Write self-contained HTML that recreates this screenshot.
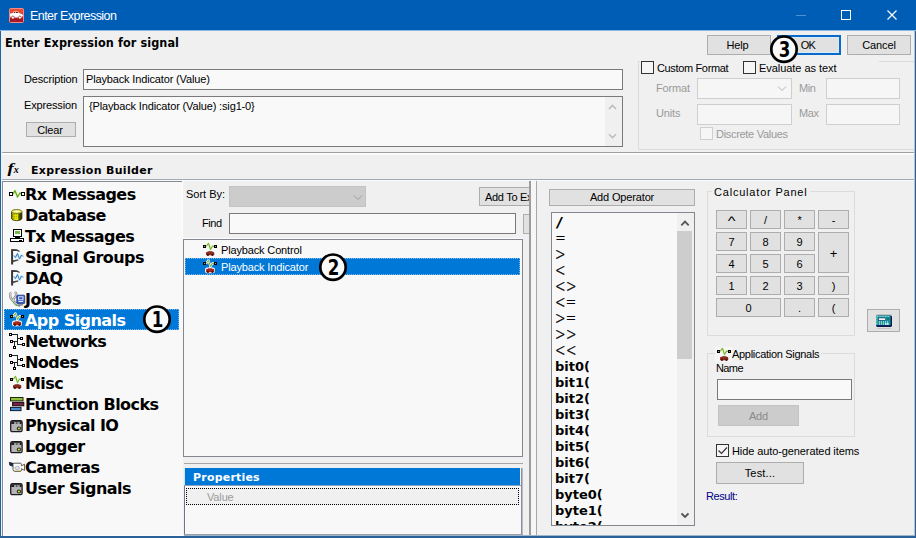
<!DOCTYPE html>
<html>
<head>
<meta charset="utf-8">
<title>Enter Expression</title>
<style>
*{box-sizing:border-box;margin:0;padding:0}
html,body{width:916px;height:538px;overflow:hidden;background:#f0f0f0}
body{position:relative;font-family:"Liberation Sans",sans-serif;font-size:11px;color:#000;letter-spacing:-0.15px}
.abs{position:absolute}
#win{position:absolute;left:0;top:0;width:916px;height:538px;background:#f0f0f0;overflow:hidden}
#title{position:absolute;left:0;top:0;width:916px;height:30px;background:#005db6}
#title .t{position:absolute;left:30px;top:9px;font-size:12.5px;line-height:15px;color:#fff;white-space:nowrap;letter-spacing:-0.55px}
.btn{position:absolute;background:#e1e1e1;border:1px solid #adadad;text-align:center;font-size:11px;white-space:nowrap;overflow:hidden}
.inp{position:absolute;background:#f9f9f9;border:1px solid #7a7a7a}
.dis{border-color:#cfcfcf;background:#f6f6f6}
.lbl{position:absolute;white-space:nowrap;font-size:11px;line-height:13px}
.gray{color:#9a9a9a}
.chk{position:absolute;width:13px;height:13px;border:1px solid #333;background:#f6f6f6}
.dj{font-family:"DejaVu Sans","Liberation Sans",sans-serif;font-weight:bold}
.djc{font-family:"DejaVu Sans Condensed","DejaVu Sans","Liberation Sans",sans-serif;font-weight:bold}
.tree{position:absolute;left:22px;font-family:"DejaVu Sans","Liberation Sans",sans-serif;font-weight:bold;font-size:16px;letter-spacing:-0.55px;white-space:nowrap;line-height:21px;height:21px}
.op{position:absolute;left:3px;font-family:"DejaVu Sans","Liberation Sans",sans-serif;font-size:13px;letter-spacing:0;white-space:nowrap;line-height:16px;height:16px}
.op.b{font-weight:bold}
.op .s{display:inline-block;transform:translateY(0.9px) scale(0.96,1.3);transform-origin:0 58%;margin-right:-0.4px;font-weight:200;-webkit-text-stroke:0.3px #000}
.op .sl{display:inline-block;transform:translate(0.7px,1.1px) scale(1.65,1.12);transform-origin:0 60%}
.ico{position:absolute;width:16px;height:16px;overflow:visible}
.circ{position:absolute;overflow:visible}
.hl{background:#0078d7}
</style>
</head>
<body>
<div id="win">
<div id="title"><div class="t">Enter Expression</div>
<svg class="abs" style="left:9.3px;top:7.6px;overflow:visible" width="15" height="15" viewBox="0 0 15 15" ><linearGradient id="tig" x1="0" y1="0" x2="0" y2="1"><stop offset="0" stop-color="#ee5030"/><stop offset=".55" stop-color="#d83a2a"/><stop offset=".8" stop-color="#9c1420"/><stop offset="1" stop-color="#b02030"/></linearGradient><rect x="0.5" y="0.5" width="14" height="14" rx="1" fill="url(#tig)" stroke="#f08a8a" stroke-width="1"/><path d="M1 6.2Q1 5.2 2.4 5.2L3.6 5.1L4.8 3.6H9L10.6 5.2L13.2 6.2L14.2 7.6L13.4 8.4H13V9.4H1.6Q1 8 1 6.2Z" fill="#fff"/><path d="M4.4 4.9L5.2 4H6.2V5Z M6.9 4H8.6L9.6 5H6.9Z" fill="#5a1a1a"/><circle cx="3.9" cy="9.6" r="1.5" fill="#fff" stroke="#a02028" stroke-width="0.7"/><circle cx="10.9" cy="9.6" r="1.5" fill="#fff" stroke="#a02028" stroke-width="0.7"/></svg>
<svg class="abs" style="left:790px;top:5px" width="120" height="20" viewBox="0 0 120 20"><path d="M6 10.5H16" stroke="#4a93d6" stroke-width="1" fill="none"/><rect x="51.5" y="5.5" width="9" height="9" fill="none" stroke="#fff" stroke-width="1"/><path d="M97.5 5.5L106.5 14.5M106.5 5.5L97.5 14.5" stroke="#fff" stroke-width="1.2" fill="none"/></svg>
</div>
<div class="abs" style="left:0;top:30px;width:916px;height:1px;background:#8fb6dc"></div>
<div class="lbl djc" style="left:5px;top:35px;font-size:12.5px;line-height:16px;letter-spacing:0.1px">Enter Expression for signal</div>
<div class="btn" style="left:707px;top:35px;width:64px;height:20px;line-height:18px;padding-right:3px">Help</div>
<div class="btn" style="left:777px;top:35px;width:64px;height:20px;line-height:16px;border:2px solid #0a6ac8;background:#d8ecfc"><div class="abs" style="left:1px;top:1px;right:1px;bottom:1px;background:#e1e1e1"></div><span style="position:relative;left:-1px;letter-spacing:-0.8px">OK</span></div>
<div class="btn" style="left:847px;top:35px;width:64px;height:20px;line-height:18px">Cancel</div>
<div class="lbl" style="left:24px;top:73px">Description</div>
<div class="inp" style="left:83px;top:69px;width:540px;height:21px"><div class="lbl" style="left:2px;top:3px">Playback Indicator (Value)</div></div>
<div class="lbl" style="left:24px;top:99px">Expression</div>
<div class="inp" style="left:83px;top:96px;width:540px;height:51px"><div class="lbl" style="left:5px;top:3px">{Playback Indicator (Value) :sig1-0}</div>
<div class="abs" style="right:0;top:0;width:17px;height:49px;background:#f0f0f0"></div>
<svg class="abs" style="right:0;top:0" width="17" height="49" viewBox="0 0 17 49"><path d="M4 12L7.5 8.5L11 12M4 37.2L7.5 40.7L11 37.2" stroke="#bdbdbd" stroke-width="1.6" fill="none"/></svg>
</div>
<div class="btn" style="left:26px;top:122px;width:50px;height:15px;line-height:13px;padding:1px 2px 0 0">Clear</div>
<div class="abs" style="left:638px;top:61px;width:276px;height:89px;border:1px solid #dcdcdc;border-right:none"></div>
<div class="abs" style="left:640px;top:60px;width:239px;height:16px;background:#f0f0f0"></div>
<div class="chk" style="left:641px;top:61px"></div>
<div class="lbl" style="left:657px;top:62px;letter-spacing:-0.35px">Custom Format</div>
<div class="chk" style="left:743px;top:61px"></div>
<div class="lbl" style="left:759px;top:62px;letter-spacing:-0.05px">Evaluate as text</div>
<div class="lbl gray" style="left:656px;top:82px">Format</div>
<div class="inp dis" style="left:697px;top:78px;width:95px;height:21px"><svg class="abs" style="right:4px;top:6px" width="10" height="7" viewBox="0 0 10 7"><path d="M1 1.5L5 5.5L9 1.5" stroke="#b4b4b4" stroke-width="1" fill="none"/></svg></div>
<div class="lbl gray" style="left:799px;top:82px;letter-spacing:-0.4px">Min</div>
<div class="inp dis" style="left:826px;top:78px;width:74px;height:21px"></div>
<div class="lbl gray" style="left:656px;top:107px">Units</div>
<div class="inp dis" style="left:697px;top:104px;width:95px;height:21px"></div>
<div class="lbl gray" style="left:799px;top:107px;letter-spacing:-0.4px">Max</div>
<div class="inp dis" style="left:826px;top:104px;width:74px;height:21px"></div>
<div class="chk" style="left:700px;top:127px;border-color:#cfcfcf;background:#f6f6f6"></div>
<div class="lbl gray" style="left:716px;top:128px;letter-spacing:-0.3px">Discrete Values</div>
<div class="abs" style="left:1px;top:152px;width:914px;height:1px;background:#a0a0a0"></div>
<div class="abs" style="left:1px;top:153px;width:914px;height:2px;background:#fbfbfb"></div>
<svg class="abs" style="left:7px;top:163px;overflow:visible" width="14" height="15" viewBox="0 0 14 15" ><text transform="translate(0.6,10) scale(1.3,1)" x="0" y="0" font-family="'Liberation Serif',serif" font-style="italic" font-weight="bold" font-size="14.5" fill="#000">f</text><text x="6.8" y="10.2" font-family="'Liberation Serif',serif" font-style="italic" font-weight="bold" font-size="10" fill="#000">x</text></svg>
<div class="lbl dj" style="left:31px;top:164px;font-size:11px;letter-spacing:0.32px">Expression Builder</div>
<div class="abs" style="left:1px;top:179px;width:914px;height:1px;background:#a3a9b3"></div>
<div class="abs" style="left:1px;top:180px;width:914px;height:1px;background:#fbfbfb"></div>
<div class="abs" id="treebox" style="left:2px;top:181px;width:181px;height:355px;background:#f8f8f8;border-left:1px solid #868a94;border-top:1px solid #868a94">
<div class="abs" style="left:0;top:0;width:1px;height:354px;background:#fff"></div>
<div class="abs hl" style="left:1px;top:127px;width:175px;height:21px;outline:1px dotted #7fb4e6;outline-offset:-1px"></div>
<div class="tree" style="top:2px">Rx Messages</div>
<div class="tree" style="top:23px">Database</div>
<div class="tree" style="top:44px">Tx Messages</div>
<div class="tree" style="top:65px">Signal Groups</div>
<div class="tree" style="top:86px">DAQ</div>
<div class="tree" style="top:107px">Jobs</div>
<div class="tree" style="top:128px;color:#fff">App Signals</div>
<div class="tree" style="top:149px">Networks</div>
<div class="tree" style="top:170px">Nodes</div>
<div class="tree" style="top:191px">Misc</div>
<div class="tree" style="top:212px">Function Blocks</div>
<div class="tree" style="top:233px">Physical IO</div>
<div class="tree" style="top:254px">Logger</div>
<div class="tree" style="top:275px">Cameras</div>
<div class="tree" style="top:296px">User Signals</div>
<svg class="abs" style="left:6px;top:7px;overflow:visible" width="16" height="10" viewBox="0 0 16 10" ><path d="M4 5L6 1.6L8.5 8L11 4L12 5" stroke="#cfe87a" stroke-width="2.2" fill="none" stroke-linejoin="round" opacity=".7"/><rect x="0.5" y="3.5" width="3" height="3" fill="#fff" stroke="#000" stroke-width="1"/><rect x="12.5" y="3.5" width="3" height="3" fill="#fff" stroke="#000" stroke-width="1"/><path d="M4 5L6 1.6L8.5 8L11 4L12 5" stroke="#5fa020" stroke-width="1.1" fill="none" stroke-linejoin="round"/></svg>
<svg class="abs" style="left:8px;top:27px;overflow:visible" width="12" height="12" viewBox="0 0 12 12" ><linearGradient id="dbg" x1="0" y1="0" x2="1" y2="0"><stop offset="0" stop-color="#7c8c14"/><stop offset=".3" stop-color="#e9e400"/><stop offset=".58" stop-color="#f6f000"/><stop offset=".72" stop-color="#5a5a00"/><stop offset="1" stop-color="#141400"/></linearGradient><path d="M0.5 2.6V9.2C0.5 10.8 3 11.6 5.7 11.6C8.4 11.6 10.9 10.8 10.9 9.2V2.6Z" fill="url(#dbg)" stroke="#3c3c00" stroke-width="0.9"/><path d="M0.8 5.6H10.6M0.8 7.4H10.6M0.8 9.2H10.6" stroke="#55600a" stroke-width="0.8" stroke-dasharray="1 1" opacity=".7"/><ellipse cx="5.7" cy="2.5" rx="5.2" ry="2" fill="#f1ee7a" stroke="#6a6a10" stroke-width="0.9"/><ellipse cx="5.7" cy="2.5" rx="3" ry="0.8" fill="#fbf9b8"/></svg>
<svg class="abs" style="left:7px;top:47px;overflow:visible" width="15" height="13" viewBox="0 0 15 13" shape-rendering="crispEdges"><rect x="3.5" y="0.5" width="8" height="7" fill="#fff" stroke="#000" stroke-width="1"/><rect x="5" y="2" width="5" height="3" fill="#74b844"/><rect x="5" y="8" width="5" height="1" fill="#000"/><rect x="0.5" y="9.5" width="13" height="3" fill="#fff" stroke="#000" stroke-width="1"/><rect x="9" y="11" width="3" height="1" fill="#000"/></svg>
<svg class="abs" style="left:8px;top:67px;overflow:visible" width="13" height="16" viewBox="0 0 13 16" ><rect x="2" y="1.6" width="6.4" height="9.6" fill="#fefefe"/><rect x="0.1" y="0.1" width="2" height="15.4" fill="#363636"/><path d="M2 0.1L5.8 0.3L8.6 1.7V2.9L5.8 2L2 1.9Z" fill="#404040"/><path d="M2 11.3L7.4 10.2V11.4L2 13.3Z" fill="#484848"/><path d="M3 6.5L4.5 8.5L6.5 4.5L8.5 10L10.5 6L12 7.5" stroke="#c4e6fa" stroke-width="2.4" fill="none" stroke-linejoin="round" opacity=".85"/><path d="M3 6.5L4.5 8.5L6.5 4.5L8.5 10L10.5 6L12 7.5" stroke="#3c7cb6" stroke-width="1" fill="none" stroke-linejoin="round"/></svg>
<svg class="abs" style="left:8px;top:88px;overflow:visible" width="13" height="16" viewBox="0 0 13 16" ><rect x="2" y="1.6" width="6.4" height="9.6" fill="#fefefe"/><rect x="0.1" y="0.1" width="2" height="15.4" fill="#363636"/><path d="M2 0.1L5.8 0.3L8.6 1.7V2.9L5.8 2L2 1.9Z" fill="#404040"/><path d="M2 11.3L7.4 10.2V11.4L2 13.3Z" fill="#484848"/><path d="M3 6.5L4.5 8.5L6.5 4.5L8.5 10L10.5 6L12 7.5" stroke="#c4e6fa" stroke-width="2.4" fill="none" stroke-linejoin="round" opacity=".85"/><path d="M3 6.5L4.5 8.5L6.5 4.5L8.5 10L10.5 6L12 7.5" stroke="#3c7cb6" stroke-width="1" fill="none" stroke-linejoin="round"/></svg>
<svg class="abs" style="left:5.699999999999999px;top:109.60000000000002px;overflow:visible" width="16" height="15" viewBox="0 0 16 15" ><path d="M1.4 1.4C0.4 4.2 2 7 4.4 9.2C6 10.6 7.6 12 10.4 13.5M6.6 0.7C7.8 2.4 7.4 4.2 5.4 6C4.6 6.8 4 7.6 4.4 9.2" stroke="#7e7e7e" stroke-width="2.3" fill="none" stroke-linecap="round"/><path d="M1.4 1.4C0.4 4.2 2 7 4.4 9.2C6 10.6 7.6 12 10.4 13.5M6.6 0.7C7.8 2.4 7.4 4.2 5.4 6C4.6 6.8 4 7.6 4.4 9.2" stroke="#f6f6f6" stroke-width="1" fill="none" stroke-linecap="round"/><path d="M4 9.4C4.6 12.4 7 14 11 13.7" stroke="#4a9a4a" stroke-width="1" fill="none"/><rect x="7.8" y="3.2" width="7.9" height="8.4" rx="0.8" fill="#3558bc" stroke="#22398a" stroke-width="0.8"/><rect x="9.6" y="4.8" width="4.4" height="3" fill="none" stroke="#dfe8ff" stroke-width="1"/><rect x="9.4" y="9" width="4.8" height="1" fill="#dfe8ff"/><rect x="9.4" y="12" width="4.6" height="1.6" fill="#8c8ca4"/></svg>
<svg class="abs" style="left:7px;top:130px;overflow:visible" width="14" height="15" viewBox="0 0 14 15" ><path d="M3 4.5L5.5 1.3L7.5 7.5L9.5 4L11 4.5" stroke="#fff" stroke-width="2.2" fill="none" stroke-linejoin="round"/><path d="M7 7.5V9.5" stroke="#fff" stroke-width="1.6"/><rect x="2" y="8.6" width="10" height="5.6" rx="2.2" fill="#fff"/><rect x="0" y="3" width="3" height="3" fill="#000"/><rect x="1" y="4" width="1" height="1" fill="#999"/><rect x="11" y="3" width="3" height="3" fill="#000"/><rect x="12" y="4" width="1" height="1" fill="#999"/><path d="M3 4.5L5.5 1.3L7.5 7.5L9.5 4L11 4.5" stroke="#6aa82a" stroke-width="1" fill="none" stroke-linejoin="round"/><path d="M3 11.2Q3 9.8 4.6 9.8L5.8 9.2H8.4L9.6 9.8Q11.3 9.8 11.3 11.2V12.3Q11.3 13.2 10.4 13.2H3.9Q3 13.2 3 12.3Z" fill="#a8281a"/><circle cx="4.9" cy="12.9" r="1.1" fill="#4a1410"/><circle cx="9.4" cy="12.9" r="1.1" fill="#4a1410"/></svg>
<svg class="abs" style="left:6px;top:151px;overflow:visible" width="16" height="17" viewBox="0 0 16 17" shape-rendering="crispEdges"><path d="M3 1.5H8.5V11.5H13.5M8.5 5.5H11.5M4 8.5H8.5M5.5 8.5V13.5" stroke="#222" stroke-width="1" fill="none"/><rect x="0.5" y="0.5" width="2" height="2" fill="#fff" stroke="#000" stroke-width="1"/><rect x="11.5" y="4.5" width="2" height="2" fill="#fff" stroke="#000" stroke-width="1"/><rect x="1.5" y="7.5" width="2" height="2" fill="#fff" stroke="#000" stroke-width="1"/><rect x="13.5" y="10.5" width="2" height="2" fill="#fff" stroke="#000" stroke-width="1"/><rect x="4.5" y="13.5" width="2" height="2" fill="#fff" stroke="#000" stroke-width="1"/></svg>
<svg class="abs" style="left:6px;top:172px;overflow:visible" width="16" height="17" viewBox="0 0 16 17" shape-rendering="crispEdges"><path d="M3 1.5H8.5V11.5H13.5M8.5 5.5H11.5M4 8.5H8.5M5.5 8.5V13.5" stroke="#222" stroke-width="1" fill="none"/><rect x="0.5" y="0.5" width="2" height="2" fill="#fff" stroke="#000" stroke-width="1"/><rect x="11.5" y="4.5" width="2" height="2" fill="#fff" stroke="#000" stroke-width="1"/><rect x="1.5" y="7.5" width="2" height="2" fill="#fff" stroke="#000" stroke-width="1"/><rect x="13.5" y="10.5" width="2" height="2" fill="#fff" stroke="#000" stroke-width="1"/><rect x="4.5" y="13.5" width="2" height="2" fill="#fff" stroke="#000" stroke-width="1"/></svg>
<svg class="abs" style="left:7px;top:193px;overflow:visible" width="14" height="15" viewBox="0 0 14 15" ><path d="M3 4.5L5.5 1.3L7.5 7.5L9.5 4L11 4.5" stroke="#d6ec9a" stroke-width="2.2" fill="none" stroke-linejoin="round" opacity=".7"/><rect x="0" y="3" width="3" height="3" fill="#000"/><rect x="1" y="4" width="1" height="1" fill="#999"/><rect x="11" y="3" width="3" height="3" fill="#000"/><rect x="12" y="4" width="1" height="1" fill="#999"/><path d="M3 4.5L5.5 1.3L7.5 7.5L9.5 4L11 4.5" stroke="#6aa82a" stroke-width="1" fill="none" stroke-linejoin="round"/><path d="M4.6 10.3Q5 8.8 6.4 8.8H8.2Q9.4 8.8 9.9 10.3Z" fill="#9fe0ea"/><path d="M3 11.2Q3 9.8 4.6 9.8L5.8 9.2H8.4L9.6 9.8Q11.3 9.8 11.3 11.2V12.3Q11.3 13.2 10.4 13.2H3.9Q3 13.2 3 12.3Z" fill="#8e2a1c"/><circle cx="4.9" cy="12.9" r="1.1" fill="#4a1410"/><circle cx="9.4" cy="12.9" r="1.1" fill="#4a1410"/></svg>
<svg class="abs" style="left:7px;top:215px;overflow:visible" width="15" height="14" viewBox="0 0 15 14" ><rect x="0.5" y="0.5" width="12.5" height="3.4" fill="#93c23a" stroke="#1c2a08" stroke-width="1"/><rect x="2.6" y="5.4" width="11.2" height="3.4" fill="#7a2148" stroke="#1a0810" stroke-width="1"/><rect x="0.5" y="10.4" width="10.5" height="3.2" fill="#4a8ad0" stroke="#0c1c30" stroke-width="1"/></svg>
<svg class="abs" style="left:6.6px;top:237.8px;overflow:visible" width="13" height="13" viewBox="0 0 13 13" ><rect x="0.7" y="0.7" width="11.4" height="11" rx="1.5" fill="#b4b4b4" stroke="#1c1c1c" stroke-width="1.3"/><path d="M1.2 1.2H11.6V3.9H9.5V2H7.5V3.9H6.3V2H4.3V3.9H1.2Z" fill="#1e1e1e"/><rect x="4.3" y="2" width="2" height="1.9" fill="#9c9c9c"/><rect x="7.5" y="2" width="2" height="1.9" fill="#9c9c9c"/><circle cx="8.9" cy="8.5" r="2.1" fill="#2a2a1a"/><circle cx="8.9" cy="8.5" r="1.1" fill="#c6de3c"/></svg>
<svg class="abs" style="left:6.6px;top:258.8px;overflow:visible" width="13" height="13" viewBox="0 0 13 13" ><rect x="0.7" y="0.7" width="11.4" height="11" rx="1.5" fill="#b4b4b4" stroke="#1c1c1c" stroke-width="1.3"/><path d="M1.2 1.2H11.6V3.9H9.5V2H7.5V3.9H6.3V2H4.3V3.9H1.2Z" fill="#1e1e1e"/><rect x="4.3" y="2" width="2" height="1.9" fill="#9c9c9c"/><rect x="7.5" y="2" width="2" height="1.9" fill="#9c9c9c"/><circle cx="8.9" cy="8.5" r="2.1" fill="#2a2a1a"/><circle cx="8.9" cy="8.5" r="1.1" fill="#c6de3c"/></svg>
<svg class="abs" style="left:6px;top:280px;overflow:visible" width="16" height="10" viewBox="0 0 16 10" ><path d="M0.3 0.3L4.8 1.6V4.6L0.8 3.2Z" fill="#1a2a55" stroke="#000" stroke-width="0.6"/><path d="M4 2.2Q4 1.2 5.2 1.2H11.2Q12.4 1.2 12.4 2.4V3.8L15.6 2.2V8.4L12.4 6.8V8Q12.4 9.4 11.2 9.4H6Q4 9.4 4 7.4Z" fill="#fbfbf4" stroke="#4a4a4a" stroke-width="0.9"/><ellipse cx="8.2" cy="6" rx="2.3" ry="1.5" fill="#e8ecf8" stroke="#8a8aa8" stroke-width="0.6"/><path d="M5 8.6H11.5" stroke="#d8d060" stroke-width="0.8"/></svg>
<svg class="abs" style="left:6.6px;top:300.8px;overflow:visible" width="13" height="13" viewBox="0 0 13 13" ><rect x="0.7" y="0.7" width="11.4" height="11" rx="1.5" fill="#b4b4b4" stroke="#1c1c1c" stroke-width="1.3"/><path d="M1.2 1.2H11.6V3.9H9.5V2H7.5V3.9H6.3V2H4.3V3.9H1.2Z" fill="#1e1e1e"/><rect x="4.3" y="2" width="2" height="1.9" fill="#9c9c9c"/><rect x="7.5" y="2" width="2" height="1.9" fill="#9c9c9c"/><circle cx="8.9" cy="8.5" r="2.1" fill="#2a2a1a"/><circle cx="8.9" cy="8.5" r="1.1" fill="#c6de3c"/></svg>
</div>
<div class="abs" style="left:182px;top:181px;width:1px;height:58px;background:#fcfcfc"></div>
<div class="lbl" style="left:186px;top:188px;letter-spacing:0">Sort By:</div>
<div class="abs" style="left:229px;top:186px;width:137px;height:21px;background:#cccccc;border:1px solid #c3c3c3"><svg class="abs" style="left:123px;top:7px" width="10" height="7" viewBox="0 0 10 7"><path d="M1 1.5L5 5.5L9 1.5" stroke="#9c9c9c" stroke-width="1" fill="none"/></svg></div>
<div class="btn" style="left:479px;top:187px;width:52px;height:19px;line-height:16px;padding-top:1px;text-align:left;padding-left:5px;letter-spacing:-0.3px">Add To Ex</div>
<div class="lbl" style="left:202px;top:217px;letter-spacing:-0.4px">Find</div>
<div class="inp" style="left:229px;top:213px;width:287px;height:21px"></div>
<div class="btn" style="left:523px;top:214px;width:8px;height:20px"></div>
<div class="abs" style="left:183px;top:238px;width:340px;height:1px;background:#fcfcfc"></div>
<div class="abs" id="list" style="left:183px;top:239px;width:340px;height:218px;background:#f8f8f8;border:1px solid #828790">
<div class="lbl" style="left:37px;top:4px">Playback Control</div>
<div class="abs hl" style="left:1px;top:18px;width:335px;height:17px;outline:1px dotted #7fb4e6;outline-offset:-1px"></div>
<div class="lbl" style="left:37px;top:21px;color:#fff">Playback Indicator</div>
<svg class="abs" style="left:19px;top:2px;overflow:visible" width="14" height="15" viewBox="0 0 14 15" ><path d="M3 4.5L5.5 1.3L7.5 7.5L9.5 4L11 4.5" stroke="#d6ec9a" stroke-width="2.2" fill="none" stroke-linejoin="round" opacity=".7"/><rect x="0" y="3" width="3" height="3" fill="#000"/><rect x="1" y="4" width="1" height="1" fill="#999"/><rect x="11" y="3" width="3" height="3" fill="#000"/><rect x="12" y="4" width="1" height="1" fill="#999"/><path d="M3 4.5L5.5 1.3L7.5 7.5L9.5 4L11 4.5" stroke="#6aa82a" stroke-width="1" fill="none" stroke-linejoin="round"/><path d="M4.6 10.3Q5 8.8 6.4 8.8H8.2Q9.4 8.8 9.9 10.3Z" fill="#9fe0ea"/><path d="M3 11.2Q3 9.8 4.6 9.8L5.8 9.2H8.4L9.6 9.8Q11.3 9.8 11.3 11.2V12.3Q11.3 13.2 10.4 13.2H3.9Q3 13.2 3 12.3Z" fill="#8e2a1c"/><circle cx="4.9" cy="12.9" r="1.1" fill="#4a1410"/><circle cx="9.4" cy="12.9" r="1.1" fill="#4a1410"/></svg>
<svg class="abs" style="left:19px;top:19px;overflow:visible" width="14" height="15" viewBox="0 0 14 15" ><path d="M3 4.5L5.5 1.3L7.5 7.5L9.5 4L11 4.5" stroke="#fff" stroke-width="2.2" fill="none" stroke-linejoin="round"/><path d="M7 7.5V9.5" stroke="#fff" stroke-width="1.6"/><rect x="2" y="8.6" width="10" height="5.6" rx="2.2" fill="#fff"/><rect x="0" y="3" width="3" height="3" fill="#000"/><rect x="1" y="4" width="1" height="1" fill="#999"/><rect x="11" y="3" width="3" height="3" fill="#000"/><rect x="12" y="4" width="1" height="1" fill="#999"/><path d="M3 4.5L5.5 1.3L7.5 7.5L9.5 4L11 4.5" stroke="#6aa82a" stroke-width="1" fill="none" stroke-linejoin="round"/><path d="M3 11.2Q3 9.8 4.6 9.8L5.8 9.2H8.4L9.6 9.8Q11.3 9.8 11.3 11.2V12.3Q11.3 13.2 10.4 13.2H3.9Q3 13.2 3 12.3Z" fill="#a8281a"/><circle cx="4.9" cy="12.9" r="1.1" fill="#4a1410"/><circle cx="9.4" cy="12.9" r="1.1" fill="#4a1410"/></svg>
</div>
<div class="abs" style="left:184px;top:463px;width:339px;height:1px;background:#a6a6a6"></div>
<div class="abs" id="props" style="left:184px;top:466px;width:339px;height:69px;background:#f8f8f8">
<div class="abs" style="left:0;top:0;width:339px;height:2px;background:#f0f0f0"></div>
<div class="abs" style="left:0;top:2px;width:1px;height:17px;background:#cfe6f8"></div>
<div class="abs hl" style="left:1px;top:2px;width:335px;height:17px"></div>
<div class="lbl dj" style="left:9px;top:5px;color:#fff;font-size:11px;letter-spacing:0.2px">Properties</div>
<div class="abs" style="left:0;top:19px;width:339px;height:1px;background:#8aa2c0"></div>
<div class="abs" style="left:0;top:20px;width:1px;height:49px;background:#6e7488"></div>
<div class="abs" style="left:1px;top:20px;width:1px;height:48px;background:#fdfdfd"></div>
<div class="abs" style="left:337px;top:2px;width:1px;height:67px;background:#8c909a"></div>
<div class="abs" style="left:338px;top:2px;width:1px;height:67px;background:#b8bcc4"></div>
<div class="abs" style="left:0;top:68px;width:339px;height:1px;background:#9a9ea6"></div>
<div class="abs" style="left:2px;top:22px;width:333px;height:17px;border:1px dotted #000;background:#f0f0f0"></div>
<div class="lbl gray" style="left:23px;top:25px">Value</div>
</div>
<div class="abs" style="left:529px;top:181px;width:2px;height:355px;background:#9c9c9c"></div>
<div class="abs" style="left:531px;top:181px;width:5px;height:355px;background:#f6f6f6"></div>
<div class="abs" style="left:536px;top:181px;width:1px;height:355px;background:#a8a8a8"></div>
<div class="btn" style="left:549px;top:189px;width:146px;height:17px;line-height:15px">Add Operator</div>
<div class="abs" id="oplist" style="left:551px;top:212px;width:144px;height:314px;background:#f8f8f8;border:1px solid #828790;overflow:hidden">
<div class="op" style="top:1px"><span class="sl">/</span></div>
<div class="op" style="top:17px">=</div>
<div class="op" style="top:33px"><span class="s">&gt;</span></div>
<div class="op" style="top:49px"><span class="s">&lt;</span></div>
<div class="op" style="top:65px"><span class="s">&lt;</span><span class="s">&gt;</span></div>
<div class="op" style="top:81px"><span class="s">&lt;</span>=</div>
<div class="op" style="top:97px"><span class="s">&gt;</span>=</div>
<div class="op" style="top:113px"><span class="s">&gt;</span><span class="s">&gt;</span></div>
<div class="op" style="top:129px"><span class="s">&lt;</span><span class="s">&lt;</span></div>
<div class="op b" style="top:146px">bit0(</div>
<div class="op b" style="top:162px">bit1(</div>
<div class="op b" style="top:178px">bit2(</div>
<div class="op b" style="top:194px">bit3(</div>
<div class="op b" style="top:210px">bit4(</div>
<div class="op b" style="top:226px">bit5(</div>
<div class="op b" style="top:242px">bit6(</div>
<div class="op b" style="top:258px">bit7(</div>
<div class="op b" style="top:274px">byte0(</div>
<div class="op b" style="top:290px">byte1(</div>
<div class="op b" style="top:306px">byte2(</div>
<div class="abs" style="left:125px;top:0;width:17px;height:312px;background:#f0f0f0"></div>
<div class="abs" style="left:125px;top:18px;width:15px;height:128px;background:#cdcdcd"></div>
<svg class="abs" style="left:125px;top:0" width="17" height="312" viewBox="0 0 17 312"><path d="M4.3 12.3L8 8.6L11.7 12.3M4.5 300.5L8 304L11.5 300.5" stroke="#555" stroke-width="1.8" fill="none"/></svg>
</div>
<div class="abs" style="left:707px;top:191px;width:148px;height:145px;border:1px solid #dcdcdc"></div>
<div class="lbl" style="left:712px;top:186px;background:#f0f0f0;padding:0 2px;letter-spacing:0.8px">Calculator Panel</div>
<div class="btn" style="left:716px;top:210px;width:31px;height:19px;line-height:19px"><span style="display:inline-block;transform:translateY(1px) scale(1.5,1.1)">^</span></div>
<div class="btn" style="left:750px;top:210px;width:31px;height:19px;line-height:19px">/</div>
<div class="btn" style="left:784px;top:210px;width:31px;height:19px;line-height:19px">*</div>
<div class="btn" style="left:818px;top:210px;width:31px;height:19px;line-height:19px">-</div>
<div class="btn" style="left:716px;top:232px;width:31px;height:19px;line-height:19px">7</div>
<div class="btn" style="left:750px;top:232px;width:31px;height:19px;line-height:19px">8</div>
<div class="btn" style="left:784px;top:232px;width:31px;height:19px;line-height:19px">9</div>
<div class="btn" style="left:818px;top:232px;width:31px;height:41px;line-height:41px"><span style="font-size:13px">+</span></div>
<div class="btn" style="left:716px;top:254px;width:31px;height:19px;line-height:19px">4</div>
<div class="btn" style="left:750px;top:254px;width:31px;height:19px;line-height:19px">5</div>
<div class="btn" style="left:784px;top:254px;width:31px;height:19px;line-height:19px">6</div>
<div class="btn" style="left:716px;top:276px;width:31px;height:19px;line-height:19px">1</div>
<div class="btn" style="left:750px;top:276px;width:31px;height:19px;line-height:19px">2</div>
<div class="btn" style="left:784px;top:276px;width:31px;height:19px;line-height:19px">3</div>
<div class="btn" style="left:818px;top:276px;width:31px;height:19px;line-height:19px">)</div>
<div class="btn" style="left:716px;top:298px;width:65px;height:19px;line-height:19px">0</div>
<div class="btn" style="left:784px;top:298px;width:31px;height:19px;line-height:19px">.</div>
<div class="btn" style="left:818px;top:298px;width:31px;height:19px;line-height:19px">(</div>
<div class="btn" style="left:867px;top:309px;width:33px;height:23px"><svg class="abs" style="left:8px;top:4px;overflow:visible" width="16" height="15" viewBox="0 0 16 15" ><rect x="0.5" y="0" width="15" height="1" fill="#c4c4c4"/><rect x="1" y="14" width="14" height="1" fill="#c4c4c4"/><rect x="0" y="1.6" width="16" height="11.4" rx="1.4" fill="#0c1850"/><rect x="0" y="1.6" width="14.6" height="10" rx="1.2" fill="#18989c"/><path d="M1 2.4H13.6" stroke="#b8f4f4" stroke-width="0.8" stroke-dasharray="1 0.6"/><path d="M0.8 2.6V11" stroke="#b8f4f4" stroke-width="0.8" stroke-dasharray="1 0.6"/><rect x="2.6" y="4" width="7" height="2.2" fill="#fff" stroke="#0c1850" stroke-width="0.5"/><rect x="10.4" y="3.6" width="3.4" height="2.6" fill="#0e7c80"/><path d="M3 8H13" stroke="#fff" stroke-width="1" stroke-dasharray="1 1"/><path d="M3 10H13" stroke="#fff" stroke-width="1" stroke-dasharray="1 1"/><rect x="9" y="9.5" width="4" height="1" fill="#fff"/><rect x="1" y="11.2" width="14" height="1.8" fill="#0c1850"/></svg></div>
<div class="abs" style="left:707px;top:353px;width:148px;height:84px;border:1px solid #dcdcdc"></div>
<div class="abs" style="left:715px;top:347px;width:17px;height:15px;background:#f6f6f6"></div>
<svg class="abs" style="left:717px;top:347px;overflow:visible" width="14" height="15" viewBox="0 0 14 15" ><path d="M3 4.5L5.5 1.3L7.5 7.5L9.5 4L11 4.5" stroke="#d6ec9a" stroke-width="2.2" fill="none" stroke-linejoin="round" opacity=".7"/><rect x="0" y="3" width="3" height="3" fill="#000"/><rect x="1" y="4" width="1" height="1" fill="#999"/><rect x="11" y="3" width="3" height="3" fill="#000"/><rect x="12" y="4" width="1" height="1" fill="#999"/><path d="M3 4.5L5.5 1.3L7.5 7.5L9.5 4L11 4.5" stroke="#6aa82a" stroke-width="1" fill="none" stroke-linejoin="round"/><path d="M4.6 10.3Q5 8.8 6.4 8.8H8.2Q9.4 8.8 9.9 10.3Z" fill="#9fe0ea"/><path d="M3 11.2Q3 9.8 4.6 9.8L5.8 9.2H8.4L9.6 9.8Q11.3 9.8 11.3 11.2V12.3Q11.3 13.2 10.4 13.2H3.9Q3 13.2 3 12.3Z" fill="#8e2a1c"/><circle cx="4.9" cy="12.9" r="1.1" fill="#4a1410"/><circle cx="9.4" cy="12.9" r="1.1" fill="#4a1410"/></svg>
<div class="lbl" style="left:732px;top:348px;background:#f0f0f0;padding:0 2px 0 0;letter-spacing:-0.3px">Application Signals</div>
<div class="lbl" style="left:716px;top:362px;letter-spacing:-0.6px">Name</div>
<div class="inp" style="left:717px;top:379px;width:135px;height:21px"></div>
<div class="abs" style="left:718px;top:405px;width:81px;height:21px;background:#cccccc;border:1px solid #c3c3c3;text-align:center;line-height:21px;color:#8a8a8a">Add</div>
<div class="chk" style="left:716px;top:444px"><svg class="abs" style="left:0;top:0" width="11" height="11" viewBox="0 0 11 11"><path d="M1.5 5.5L4.5 8.5L10 2.5" stroke="#333" stroke-width="1.2" fill="none"/></svg></div>
<div class="lbl" style="left:732px;top:445px;letter-spacing:-0.1px">Hide auto-generated items</div>
<div class="btn" style="left:716px;top:462px;width:88px;height:22px;line-height:20px;letter-spacing:0.2px">Test...</div>
<div class="lbl" style="left:706px;top:490px;color:#00008b;letter-spacing:-0.4px">Result:</div>
<div class="abs" style="left:0;top:31px;width:1px;height:507px;background:#2b6199"></div>
<div class="abs" style="left:1px;top:31px;width:1px;height:505px;background:#ddf5ff"></div>
<div class="abs" style="left:915px;top:31px;width:1px;height:507px;background:#2b6199"></div>
<div class="abs" style="left:914px;top:31px;width:1px;height:505px;background:#b4c2d0"></div>
<div class="abs" style="left:0;top:536px;width:916px;height:2px;background:#2b6199"></div>
<div class="abs" style="left:184px;top:535px;width:731px;height:1px;background:#9fb4c9"></div><div class="abs" style="left:3px;top:535px;width:181px;height:1px;background:#fdfdfd"></div>
<svg class="circ" style="left:769px;top:34px" width="30" height="30" viewBox="0 0 30 30"><circle cx="15" cy="15.2" r="12.7" fill="#fafafa" stroke="#000" stroke-width="2.7"/><text transform="translate(15.6,22.9) scale(0.88,1)" x="0" y="0" text-anchor="middle" font-family="'DejaVu Sans Condensed','DejaVu Sans',sans-serif" font-weight="bold" font-size="21" letter-spacing="0" fill="#000">3</text></svg>
<svg class="circ" style="left:142px;top:304px" width="30" height="30" viewBox="0 0 30 30"><circle cx="15" cy="15.2" r="12.7" fill="#fafafa" stroke="#000" stroke-width="2.7"/><text transform="translate(15.6,22.9) scale(0.88,1)" x="0" y="0" text-anchor="middle" font-family="'DejaVu Sans Condensed','DejaVu Sans',sans-serif" font-weight="bold" font-size="21" letter-spacing="0" fill="#000">1</text></svg>
<svg class="circ" style="left:318px;top:252px" width="30" height="30" viewBox="0 0 30 30"><circle cx="15" cy="15.2" r="12.7" fill="#fafafa" stroke="#000" stroke-width="2.7"/><text transform="translate(15.6,22.9) scale(0.88,1)" x="0" y="0" text-anchor="middle" font-family="'DejaVu Sans Condensed','DejaVu Sans',sans-serif" font-weight="bold" font-size="21" letter-spacing="0" fill="#000">2</text></svg>
</div>
</body>
</html>
